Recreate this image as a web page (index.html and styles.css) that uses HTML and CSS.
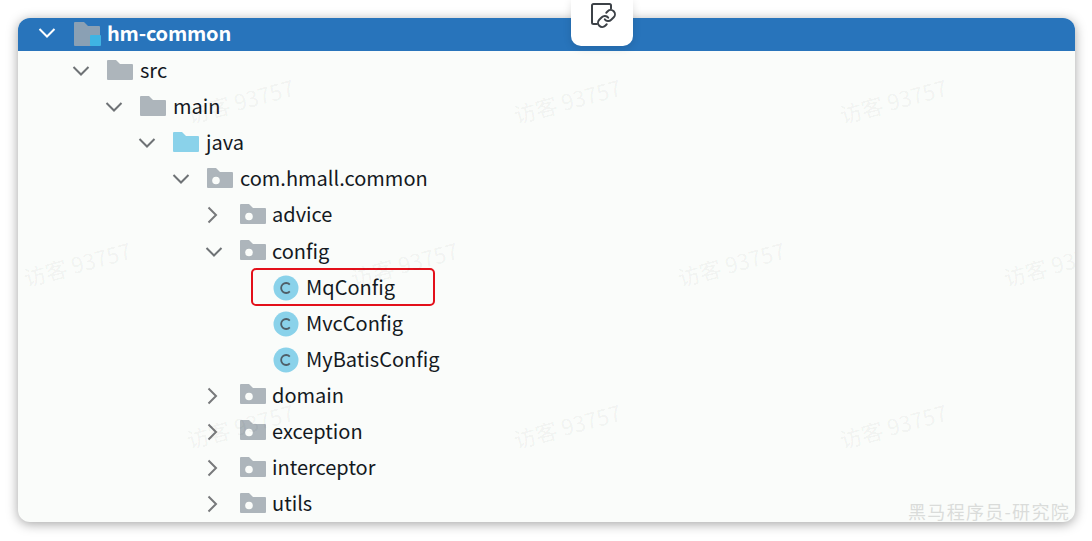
FILE: index.html
```html
<!DOCTYPE html>
<html lang="zh">
<head>
<meta charset="utf-8">
<title>hm-common</title>
<link rel="stylesheet" href="styles.css">
</head>
<body>
<svg class="defs" width="0" height="0" aria-hidden="true">
  <symbol id="down" viewBox="0 0 18 12"><path d="M1.5 2 9 9.5 16.5 2" fill="none" stroke="#6e7275" stroke-width="2"/></symbol>
  <symbol id="right" viewBox="0 0 18 18"><path d="M5.5 1.5 13 9 5.5 16.500" fill="none" stroke="#77797b" stroke-width="2"/></symbol>
  <symbol id="folder" viewBox="0 0 26 20"><path d="M0 1a1 1 0 0 1 1-1h8l4 4h12a1 1 0 0 1 1 1v14a1 1 0 0 1-1 1H1a1 1 0 0 1-1-1z" fill="currentColor"/></symbol>
  <symbol id="package" viewBox="0 0 26 20"><path d="M0 1a1 1 0 0 1 1-1h8l4 4h12a1 1 0 0 1 1 1v14a1 1 0 0 1-1 1H1a1 1 0 0 1-1-1z" fill="#adb5bb"/><circle cx="9" cy="12.500" r="3.800" fill="#fafcfa"/></symbol>
  <symbol id="class" viewBox="0 0 26 26"><circle cx="13" cy="13" r="12.500" fill="#8ad2ea"/><path d="M16.800 9.600a5 5 0 1 0 0 6.800" fill="none" stroke="#4f5f68" stroke-width="1.800"/></symbol>
</svg>

<div class="link-tab">
  <svg class="link-icon" viewBox="0 0 27 26" width="27" height="26" aria-hidden="true">
    <path d="M8 21H4.500A1.500 1.500 0 0 1 3 19.500V2.500A1.500 1.500 0 0 1 4.500 1H20.500A1.500 1.500 0 0 1 22 2.500V5.500" fill="none" stroke="#3c4147" stroke-width="2" stroke-linecap="round"/>
    <g transform="translate(7.300 5.300) scale(.85)" fill="none" stroke="#3c4147" stroke-width="2.300" stroke-linecap="round">
      <path d="M10 13a5 5 0 0 0 7.540.54l3-3a5 5 0 0 0-7.070-7.070l-1.720 1.710"/>
      <path d="M14 11a5 5 0 0 0-7.540-.54l-3 3a5 5 0 0 0 7.070 7.070l1.710-1.710"/>
    </g>
  </svg>
</div>

<main class="card">
  <div class="header row">
    <svg class="chev chev-head" aria-hidden="true"><use href="#down"/></svg>
    <svg class="module" viewBox="0 0 28 24" width="28" height="24" aria-hidden="true">
      <path d="M0 1a1 1 0 0 1 1-1h9l4 4h11a1 1 0 0 1 1 1v18a1 1 0 0 1-1 1H1a1 1 0 0 1-1-1z" fill="#8aa0b4"/>
      <rect x="16" y="13" width="11" height="11" rx="1" fill="#3fb4e3"/>
    </svg>
    <span class="name-bold">hm-common</span>
  </div>

  <div class="row l1"><svg class="chev"><use href="#down"/></svg><svg class="icon grey"><use href="#folder"/></svg><span>src</span></div>
  <div class="row l2"><svg class="chev"><use href="#down"/></svg><svg class="icon grey"><use href="#folder"/></svg><span>main</span></div>
  <div class="row l3"><svg class="chev"><use href="#down"/></svg><svg class="icon blue"><use href="#folder"/></svg><span>java</span></div>
  <div class="row l4"><svg class="chev"><use href="#down"/></svg><svg class="icon"><use href="#package"/></svg><span>com.hmall.common</span></div>
  <div class="row l5"><svg class="chev chev-r"><use href="#right"/></svg><svg class="icon"><use href="#package"/></svg><span>advice</span></div>
  <div class="row l5"><svg class="chev"><use href="#down"/></svg><svg class="icon"><use href="#package"/></svg><span>config</span></div>
  <div class="row l6"><svg class="cls"><use href="#class"/></svg><span>MqConfig</span><div class="highlight"></div></div>
  <div class="row l6"><svg class="cls"><use href="#class"/></svg><span>MvcConfig</span></div>
  <div class="row l6"><svg class="cls"><use href="#class"/></svg><span>MyBatisConfig</span></div>
  <div class="row l5"><svg class="chev chev-r"><use href="#right"/></svg><svg class="icon"><use href="#package"/></svg><span>domain</span></div>
  <div class="row l5"><svg class="chev chev-r"><use href="#right"/></svg><svg class="icon"><use href="#package"/></svg><span>exception</span></div>
  <div class="row l5"><svg class="chev chev-r"><use href="#right"/></svg><svg class="icon"><use href="#package"/></svg><span>interceptor</span></div>
  <div class="row l5"><svg class="chev chev-r"><use href="#right"/></svg><svg class="icon"><use href="#package"/></svg><span>utils</span></div>

  <div class="wm wm1">访客 93757</div>
  <div class="wm wm2">访客 93757</div>
  <div class="wm wm3">访客 93757</div>
  <div class="wm wm4">访客 93757</div>
  <div class="wm wm5">访客 93757</div>
  <div class="wm wm6">访客 93757</div>
  <div class="wm wm7">访客 93757</div>
  <div class="wm wm8">访客 93757</div>
  <div class="wm wm9">访客 93757</div>
  <div class="wm wm10">访客 93757</div>
  <div class="brand">黑马程序员-研究院</div>
</main>
</body>
</html>
```
FILE: styles.css
```css
* { box-sizing: border-box; }
html, body { margin: 0; height: 100%; overflow: hidden; background: #fff; }
body { padding: 18px 17px 0 18px; font-family: "Noto Sans CJK SC", "Noto Sans", sans-serif; color: #14191e; }
.defs { position: absolute; }

.card {
  position: relative;
  height: 504px;
  background: #fafcfa;
  border-radius: 12px;
  overflow: hidden;
  box-shadow: 0 2px 12px rgba(0, 0, 0, .36);
}

.row {
  position: relative;
  display: flex;
  align-items: center;
  height: 36.1px;
  font-size: 20px;
  line-height: 36px;
  white-space: nowrap;
}
.header {
  height: 33px;
  margin-bottom: 2px;
  padding-left: 20px;
  background: #2874bb;
  color: #fff;
}
.name-bold { font-weight: 700; margin-left: 6px; margin-top: -2px; letter-spacing: -.2px; }
.chev { width: 18px; height: 12px; margin-right: 17px; flex: none; }
.chev-r { height: 18px; margin-left: -2px; margin-right: 19px; }
.chev-head { margin-top: -3px; margin-right: 18px; }
.header .chev { filter: brightness(0) invert(1); }
.module { flex: none; margin-top: -1px; margin-right: -1px; }

.icon { width: 26px; height: 20px; margin-right: 7px; margin-top: -3px; flex: none; }
.l5 .icon { margin-right: 6px; }
.cls { width: 26px; height: 26px; margin-right: 7px; flex: none; }
.grey { color: #adb5bb; }
.blue { color: #8ad2ea; }
.row > span { position: relative; top: -1px; }

.l1 { padding-left: 54px; }
.l2 { padding-left: 87px; }
.l3 { padding-left: 120px; }
.l4 { padding-left: 154px; }
.l5 { padding-left: 187px; }
.l6 { padding-left: 255px; }

.highlight {
  position: absolute;
  left: 232.500px;
  top: -2px;
  width: 184px;
  height: 38px;
  border: 2.500px solid #e3101a;
  border-radius: 5px;
}

.link-tab {
  position: absolute;
  z-index: 2;
  left: 571px;
  top: 0;
  width: 62px;
  height: 46px;
  background: #fff;
  border-radius: 0 0 10px 10px;
  box-shadow: 0 2px 8px rgba(0, 0, 0, .12);
  padding: 3px 0 0 18px;
}
.link-icon { display: block; }

.wm {
  position: absolute;
  font-size: 22px;
  line-height: 28px;
  white-space: nowrap;
  color: rgba(0, 0, 0, .055);
  transform: translate(-50%, -50%) rotate(-15deg);
  pointer-events: none;
}
.wm1 { left: 222px; top: 82px; }
.wm2 { left: 549px; top: 82px; }
.wm3 { left: 875px; top: 82px; }
.wm4 { left: 59px; top: 245px; }
.wm5 { left: 386px; top: 245px; }
.wm6 { left: 713px; top: 245px; }
.wm7 { left: 1039px; top: 245px; }
.wm8 { left: 222px; top: 407px; }
.wm9 { left: 549px; top: 407px; }
.wm10 { left: 875px; top: 407px; }

.brand {
  position: absolute;
  right: 5px;
  bottom: 0;
  font-size: 18px;
  line-height: 22px;
  letter-spacing: 1.300px;
  color: #dadcda;
  font-family: "Noto Sans CJK SC", sans-serif;
}
```
